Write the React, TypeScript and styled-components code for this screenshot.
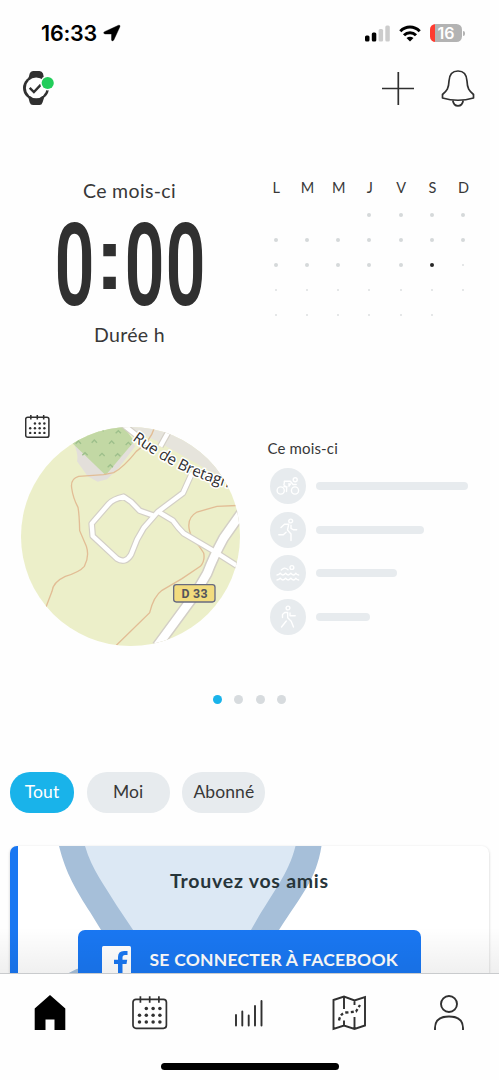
import React from "react";
import styled, { createGlobalStyle } from "styled-components";

const Global = createGlobalStyle`
  * { box-sizing: border-box; }
  html, body { margin: 0; padding: 0; background: #fff; }
  body { font-family: Lato, "Open Sans", sans-serif; color: #383838; }
  svg { display: block; flex: none; }
  button { font: inherit; color: inherit; border: 0; background: none; padding: 0; }
`;

const Screen = styled.div`
  width: 499px;
  height: 1080px;
  display: flex;
  flex-direction: column;
  overflow: hidden;
  background: #fefefe;
`;

const StatusBar = styled.div`
  height: 66px;
  flex: none;
  display: flex;
  align-items: center;
  padding: 0 34px 0 41px;
`;

const Clock = styled.span`
  width: 62px;
  font: 600 21.5px/26px Inter, sans-serif;
  letter-spacing: -0.2px;
  color: #000;
`;

const StatusIcons = styled.div`
  margin-left: auto;
  display: flex;
  align-items: center;
  gap: 9px;
`;

const Battery = styled.div`
  width: 32px;
  height: 18px;
  border-radius: 5.5px;
  background: linear-gradient(90deg, #ff3b30 5.5px, #b3b3b3 5.5px);
  color: #fff;
  font: 600 16px/18px Inter, sans-serif;
  text-align: center;
`;

const BatteryWrap = styled.div`
  display: flex;
  align-items: center;
  gap: 1px;
`;

const BatteryTip = styled.i`
  width: 2px;
  height: 5px;
  border-radius: 0 2px 2px 0;
  background: #b3b3b3;
`;

const Header = styled.header`
  height: 44px;
  flex: none;
  display: flex;
  align-items: center;
  padding: 0 24px 0 22px;
`;

const HeaderActions = styled.div`
  margin-left: auto;
  display: flex;
  align-items: center;
  gap: 27px;
`;

const Feed = styled.main`
  flex: 1;
  min-height: 0;
  overflow: hidden;
  position: relative;
`;

const Summary = styled.section`
  display: flex;
  height: 304px;
  padding-top: 69px;
`;

const Total = styled.div`
  width: 259px;
  display: flex;
  flex-direction: column;
  align-items: center;
`;

const Label = styled.div`
  font-size: 19.5px;
  line-height: 24px;
  letter-spacing: 0.35px;
`;

const Figure = styled.div`
  height: 96px;
  margin: 15px 0 9px 1px;
  display: flex;
  align-items: flex-start;
  justify-content: center;
  color: #303030;
`;

const Digit = styled.span`
  width: 35px;
  display: flex;
  justify-content: center;
  font: 600 115px/96px Roboto, sans-serif;
  transform: scaleX(0.61);
  & + & {
    margin-left: 6px;
  }
`;

const Colon = styled.span`
  width: 35px;
  margin-top: -8px;
  text-align: center;
  font: 700 89px/96px "Liberation Sans", sans-serif;
`;

const Month = styled.div`
  display: grid;
  grid-template-columns: repeat(7, 31.25px);
  grid-template-rows: 24px repeat(5, 25px);
  margin-left: 1px;
  margin-top: -3px;
  height: 150px;
  justify-items: center;
  align-items: center;
`;

const Weekday = styled.span`
  font-size: 14.5px;
  line-height: 20px;
  padding-left: 1px;
`;

const Day = styled.i<{ $kind: "past" | "today" | "next" | "none" }>`
  --d: ${(p) => (p.$kind === "next" ? 2 : 4)}px;
  width: var(--d);
  height: var(--d);
  border-radius: 50%;
  margin-top: 5px;
  background: ${(p) =>
    ({ past: "#d5d9da", today: "#262626", next: "#dcdfe0", none: "transparent" })[p.$kind]};
`;

const Activity = styled.section`
  display: flex;
  height: 232px;
`;

const MapPanel = styled.div`
  width: 267.5px;
  padding-left: 20.5px;
`;

const CalendarBadge = styled.div`
  padding-left: 4px;
  height: 13px;
`;

const MapDisc = styled.div`
  width: 219px;
  height: 219px;
  border-radius: 50%;
  overflow: hidden;
`;

const Sports = styled.div`
  padding-top: 23.5px;
  display: flex;
  flex-direction: column;
`;

const SportsTitle = styled.div`
  font-size: 15px;
  line-height: 20px;
  letter-spacing: 0.15px;
  margin-bottom: 10.5px;
`;

const SportRow = styled.div`
  display: flex;
  align-items: center;
  gap: 10px;
  height: 36px;
  margin: 0 0 7.5px 2.5px;
`;

const SportIcon = styled.div`
  width: 36px;
  height: 36px;
  border-radius: 50%;
  background: #e7ebee;
  display: grid;
  place-items: center;
`;

const SportBar = styled.div<{ $w: number }>`
  width: ${(p) => p.$w}px;
  height: 8px;
  border-radius: 4px;
  background: #e7ebee;
`;

const Pager = styled.div`
  display: flex;
  justify-content: center;
  gap: 12.2px;
  padding-top: 49.2px;
  height: 125.5px;
`;

const PageDot = styled.i<{ $on?: boolean }>`
  width: 9px;
  height: 9px;
  border-radius: 50%;
  background: ${(p) => (p.$on ? "#19b3ea" : "#d7dbde")};
`;

const Filters = styled.div`
  display: flex;
  gap: 12.7px;
  padding-left: 10px;
`;

const Chip = styled.button<{ $w: number; $on?: boolean }>`
  width: ${(p) => p.$w}px;
  height: 41px;
  border-radius: 20px;
  background: ${(p) => (p.$on ? "#19b3ea" : "#e7ebee")};
  color: ${(p) => (p.$on ? "#fff" : "#383838")};
  font-size: 17.5px;
  line-height: 22px;
  letter-spacing: 0.1px;
`;

const Card = styled.article`
  margin: 33.5px 10px 0 10px;
  height: 240px;
  border-radius: 7px;
  border-left: 8px solid #1977f2;
  background: #fff;
  box-shadow: 0 1px 3px rgba(0, 0, 0, 0.2);
  overflow: hidden;
  display: grid;
`;

const PinArt = styled.svg`
  grid-area: 1 / 1;
`;

const CardBody = styled.div`
  grid-area: 1 / 1;
  display: flex;
  flex-direction: column;
  align-items: flex-start;
  padding: 23px 0 0 60px;
`;

const CardTitle = styled.h2`
  margin: 0;
  width: 343px;
  text-align: center;
  font-size: 19.5px;
  line-height: 24px;
  font-weight: 700;
  letter-spacing: 0.75px;
  color: #27353a;
`;

const FacebookButton = styled.button`
  margin-top: 37px;
  width: 343px;
  height: 62px;
  border-radius: 7px;
  background: #1977f2;
  color: #fff;
  display: flex;
  align-items: flex-start;
  padding: 16px 0 0 23.5px;
  gap: 19px;
  font-size: 17.5px;
  line-height: 27px;
  font-weight: 700;
  letter-spacing: 0.24px;
  white-space: nowrap;
`;

const FeedFade = styled.div`
  position: absolute;
  left: 0;
  right: 0;
  bottom: 0;
  height: 46px;
  background: linear-gradient(rgba(0, 0, 0, 0), rgba(0, 0, 0, 0.06));
`;

const Dock = styled.footer`
  height: 107px;
  flex: none;
  border-top: 1px solid #c9cbcd;
  background: #fefefe;
  display: flex;
  flex-direction: column;
  align-items: center;
`;

const Tabs = styled.nav`
  width: 100%;
  height: 90px;
  display: grid;
  grid-template-columns: repeat(5, 1fr);
  justify-items: center;
  padding-top: 19px;
`;

const HomeIndicator = styled.div`
  width: 178px;
  height: 6.5px;
  border-radius: 4px;
  background: #000;
  margin-top: -1px;
`;

const CalendarIcon = ({ size, w = 1.7, top = 0 }: { size: number; w?: number; top?: number }) => (
  <svg width={size} height={size + top} viewBox={`0 ${-top} 36 ${36 + top}`} fill="none" stroke="#303030" strokeWidth={w}>
    <rect x="1" y="3.3" width="33.4" height="29" rx="3" />
    <path d="M8.4 0.2v6.6M17.7 0.2v6.6M26.9 0.2v6.6" />
    <g fill="#303030" stroke="none">
      {[12.4, 19.2, 26].map((y, r) =>
        [7.5, 14.3, 21.1, 27.9].map((x, c) =>
          r === 0 && c === 0 ? null : <circle key={`${r}-${c}`} cx={x} cy={y} r="1.75" />
        )
      )}
    </g>
  </svg>
);

const WatchIcon = () => (
  <svg width="34" height="38" viewBox="0 0 34 38">
    <path d="M6.500 9 7.700 4.500Q8.500 2 11 2h6.500Q20 2 21 4.500L22 9v20l-1.500 4.500q-.7 2.500-3 2.500H11q-2.500 0-3.300-2.500L6.500 29Z" fill="#303030" />
    <ellipse cx="14" cy="19" rx="13" ry="12.500" fill="#303030" />
    <circle cx="14.200" cy="18.900" r="10.300" fill="#fefefe" />
    <path d="m7.700 18.800 4.200 4.200 7-7.300" fill="none" stroke="#303030" strokeWidth="2.400" />
    <circle cx="25.700" cy="14" r="7.500" fill="#fefefe" />
    <circle cx="25.700" cy="14" r="6.100" fill="#22cd5a" />
  </svg>
);

const sportStroke = { fill: "none", stroke: "#fff", strokeWidth: 1.4, strokeLinecap: "round", strokeLinejoin: "round" } as const;

const Bike = () => (
  <svg width="24" height="24" viewBox="0 0 24 24" {...sportStroke}>
    <circle cx="4.700" cy="16.500" r="3.600" /><circle cx="19" cy="16.500" r="3.600" /><circle cx="19.200" cy="5.700" r="2" />
    <path d="M10.500 17.500 10.700 13 8.300 11.500Q7.500 10.500 8.300 9V7.300h6l2.700 3.200h3.200M13 9.500v2.700L14.500 10M8 12.500l3 .5" />
  </svg>
);
const Run = () => (
  <svg width="24" height="24" viewBox="0 0 24 24" {...sportStroke}>
    <circle cx="14.700" cy="3" r="1.900" />
    <path d="M5 9.500 8.500 6.300h4.200L11.500 12l3.500 4v6.500M15 7.300v3.200l2.200 1.200h3.500M2.800 16.800h4.500l2.800-2.500" />
  </svg>
);
const Swim = () => (
  <svg width="24" height="24" viewBox="0 0 24 24" {...sportStroke}>
    <circle cx="15.900" cy="6.500" r="1.900" />
    <path d="M5.300 9 7 7.700Q9 6.200 12 8.800" />
    <path d="M1 14Q3.200 14 4.200 12.200 5.300 14 6.900 14T9.600 12.200Q10.700 14 12.200 14T14.800 12.200Q16 14 17.400 14T19.700 12.200Q21 14 22.700 14" />
    <path d="M1 19Q3.200 19 4.200 17.200 5.300 19 6.900 19T9.600 17.200Q10.700 19 12.200 19T14.800 17.200Q16 19 17.400 19T19.700 17.200Q21 19 22.700 19" />
  </svg>
);
const Walk = () => (
  <svg width="24" height="24" viewBox="0 0 24 24" {...sportStroke}>
    <circle cx="12" cy="3" r="1.900" />
    <path d="M6.500 12.500V9.500L8.700 7.500h3v5.300l3.500 3.500 2.300 5.700M10.300 16l-4.800 6M14 8v2.700h5.200" />
  </svg>
);

const TileMap = () => {
  const lanes = [
    "M300 30 370 85 420 125",
    "M475 80 450 125",
    "M545 205 518 265 443 321 400 370 380 405 362 450Q345 478 320 462L247 394 244 357 295 298Q308 283 340 276L362 291 388 318 433 334",
    "M443 321 488 348Q505 372 520 386L612 440 690 490",
  ];
  return (
    <svg width="219" height="219" viewBox="32 67 657 657">
      <rect x="30" y="60" width="670" height="670" fill="#ecefc9" />
      <path d="M335 60 440 110 600 200 700 240V60Z" fill="#e6e4dc" />
      <path d="M190 115Q205 150 200 170L232 215 262 231 290 224 325 190 375 125 330 60Z" fill="#e3dfda" />
      <path d="M180 110 290 60H335L372 110 286 212Z" fill="#c2d8a4" />
      <g fill="none" stroke="#9dbf8b" strokeWidth="4">
        {[[204, 113], [252, 110], [304, 113], [354, 117], [324, 82], [224, 148], [275, 150], [322, 151], [300, 184], [272, 76]].map(([x, y]) => (
          <path key={`${x}-${y}`} d={`M${x - 8} ${y + 4}l8-8 8 8`} />
        ))}
      </g>
      <g fill="none" stroke="#e2bd95" strokeWidth="4">
        <path d="M432 70Q420 110 378 140 340 188 310 204L280 210 205 215Q180 222 184 250 188 280 203 308 207 330 208 378L228 425Q238 455 222 485 208 502 165 515 128 532 125 560L107 607" />
        <path d="M318 722 418 624Q430 575 455 557L515 522 570 485Q585 468 580 445 568 425 545 398 520 345 560 322L620 305 690 302" />
      </g>
      <g fill="none" strokeLinejoin="round">
        {lanes.map((d) => <path key={d} d={d} stroke="#d3cfc6" strokeWidth="20" />)}
        <path d="M700 315 640 400Q610 455 590 507L550 575 440 725" stroke="#d3cfc6" strokeWidth="34" />
        {lanes.map((d) => <path key={d} d={d} stroke="#fff" strokeWidth="13" />)}
        <path d="M700 315 640 400Q610 455 590 507L550 575 440 725" stroke="#fff" strokeWidth="25" />
      </g>
      <path id="street" d="M365 106Q440 160 510 195T720 268" fill="none" />
      <text fontFamily="Open Sans, sans-serif" fontSize="46" fontWeight="500" fill="#303030" stroke="#fff" strokeWidth="9" paintOrder="stroke" strokeLinejoin="round" letterSpacing="-0.4">
        <textPath href="#street">Rue de Bretagn</textPath>
      </text>
      <rect x="490" y="540" width="124" height="52" rx="8" fill="#f2dc7e" stroke="#686b80" strokeWidth="4" />
      <text x="553" y="579" textAnchor="middle" fontFamily="Roboto, sans-serif" fontSize="37" fontWeight="700" fill="#53545c" letterSpacing="1">D 33</text>
    </svg>
  );
};

const kinds = (r: number, c: number) => {
  if ((r === 0 && c < 3) || (r === 4 && c === 6)) return "none";
  if (r === 2 && c === 5) return "today";
  return r * 7 + c > 19 ? "next" : "past";
};

const sports = [
  { icon: <Bike />, w: 152 },
  { icon: <Run />, w: 108 },
  { icon: <Swim />, w: 81 },
  { icon: <Walk />, w: 53.5 },
];

export default function App() {
  return (
    <Screen>
      <Global />
      <StatusBar>
        <Clock>16:33</Clock>
        <svg width="19" height="18" viewBox="0 0 19 18">
          <path d="M1.500 7.700 15.500 1.300q2-.5 1.400 1.500L10.800 16Q9.200 18 8.500 16V10H2Q-.5 9.300 1.500 7.700Z" fill="#000" stroke="#000" strokeWidth=".4" />
        </svg>
        <StatusIcons>
          <svg width="25" height="17" viewBox="0 0 25 17">
            <rect x="0" y="10.500" width="4.500" height="6" rx="1.500" />
            <rect x="6.800" y="7.500" width="4.500" height="9" rx="1.500" />
            <rect x="13.600" y="4" width="4.500" height="12.500" rx="1.500" fill="#ccc" />
            <rect x="20.300" y="0.500" width="4.500" height="16" rx="1.500" fill="#ccc" />
          </svg>
          <svg width="22" height="17" viewBox="0 0 22 17" fill="none" stroke="#000" strokeWidth="3">
            <path d="M1.300 6.200Q5.500 2 11 2t9.700 4.200M5 10.200Q7.500 7.700 11 7.700t6 2.500" />
            <path d="M11 16.500 7.500 13q3.500-2.600 7 0Z" fill="#000" stroke="none" />
          </svg>
          <BatteryWrap><Battery>16</Battery><BatteryTip /></BatteryWrap>
        </StatusIcons>
      </StatusBar>
      <Header>
        <WatchIcon />
        <HeaderActions>
          <svg width="33" height="33" viewBox="0 0 33 33" stroke="#303030" strokeWidth="1.700"><path d="M1 16.500h32M17.300 0v33" /></svg>
          <svg width="34" height="37" viewBox="0 0 34 37" fill="none" stroke="#303030" strokeWidth="1.700" strokeLinejoin="round">
            <path d="M17 1C10.500 1 8.300 5.500 8 11 7.700 18.500 6 20.500 1.500 24.500V28Q17 32.500 32.500 28V24.500C28 20.500 26.300 18.500 26 11 25.700 5.500 23.500 1 17 1Z" />
            <path d="M11.800 30.500q.8 5.300 5.200 5.300t5.200-5.300" />
          </svg>
        </HeaderActions>
      </Header>
      <Feed>
        <Summary>
          <Total>
            <Label>Ce mois-ci</Label>
            <Figure>
              <Digit>0</Digit>
              <Colon>:</Colon>
              <Digit>0</Digit>
              <Digit>0</Digit>
            </Figure>
            <Label>Durée h</Label>
          </Total>
          <Month>
            {["L", "M", "M", "J", "V", "S", "D"].map((d, i) => <Weekday key={i}>{d}</Weekday>)}
            {Array.from({ length: 35 }, (_, i) => <Day key={i} $kind={kinds(Math.floor(i / 7), i % 7)} />)}
          </Month>
        </Summary>
        <Activity>
          <MapPanel>
            <CalendarBadge><CalendarIcon size={25} w={2.2} top={1} /></CalendarBadge>
            <MapDisc><TileMap /></MapDisc>
          </MapPanel>
          <Sports>
            <SportsTitle>Ce mois-ci</SportsTitle>
            {sports.map((s) => (
              <SportRow key={s.w}><SportIcon>{s.icon}</SportIcon><SportBar $w={s.w} /></SportRow>
            ))}
          </Sports>
        </Activity>
        <Pager><PageDot $on /><PageDot /><PageDot /><PageDot /></Pager>
        <Filters>
          <Chip $w={64} $on>Tout</Chip>
          <Chip $w={83}>Moi</Chip>
          <Chip $w={83}>Abonné</Chip>
        </Filters>
        <Card>
          <PinArt width="470" height="240" viewBox="18 846 470 240">
            <path d="M59 846C66 874 76 890 90 912L150 1010 232 1010 279 930C302 894 316 880 321.500 846Z" fill="#a6bfd9" />
            <path d="M85 846C92 870 105 886 117 906L180 1000 210 1000 251 930C272 892 288 876 295.500 846Z" fill="#dce8f4" />
            <path d="M66 975Q72 970 86 966V980Z" fill="#a6bfd9" />
          </PinArt>
          <CardBody>
            <CardTitle>Trouvez vos amis</CardTitle>
            <FacebookButton>
              <svg width="29" height="29" viewBox="0 0 29 29">
                <rect width="29" height="29" rx="1.500" fill="#fff" />
                <path d="M16 29V18h-4v-4.300h4V11q0-6 6-6h3.500v4H23q-2.500 0-2.500 2.500v2.200h4.700L24.500 18h-4v11Z" fill="#1977f2" />
              </svg>
              SE CONNECTER À FACEBOOK
            </FacebookButton>
          </CardBody>
        </Card>
        <FeedFade />
      </Feed>
      <Dock>
        <Tabs>
          <svg width="36" height="40" viewBox="0 0 36 40"><path d="M18 2 33.300 15.500V37H22.500V26.500H13.500V37H2.700V15.500Z" /></svg>
          <CalendarIcon size={36} top={3} />
          <svg width="32" height="40" viewBox="0 0 32 40" stroke="#303030" strokeWidth="1.900" strokeLinecap="round">
            <path d="M3 22v10.500M9.300 18.500v14M15.700 22.500v10M22 13v19.500M28.500 8v24.500" />
          </svg>
          <svg width="36" height="40" viewBox="0 0 36 40" fill="none" stroke="#303030" strokeWidth="1.900">
            <path d="M2.500 7 13 3.500 23.500 7.500 34 4V32.500L23.500 36 13 32.500 2.500 36ZM13 3.500V16M23.500 7.500V12M13 32.500V27.500M23.500 36V24" />
            <path d="M8 27.500Q9.500 20 15 19.500T25 18.500L29 12" strokeWidth="2.300" strokeDasharray="3 2.300" />
          </svg>
          <svg width="36" height="40" viewBox="0 0 36 40" fill="none" stroke="#303030" strokeWidth="1.900">
            <circle cx="18" cy="11" r="8" /><path d="M4 37v-2Q4 23.500 18 23.500T32 35v2" />
          </svg>
        </Tabs>
        <HomeIndicator />
      </Dock>
    </Screen>
  );
}
